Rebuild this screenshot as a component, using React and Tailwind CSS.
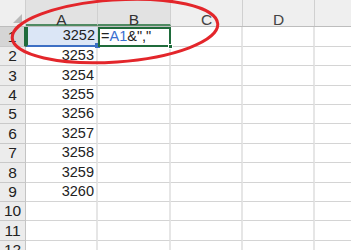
import React from 'react';

const cols = ['A', 'B', 'C', 'D', 'E'];
const colW = ['w-[72px]', 'w-[73px]', 'w-[72px]', 'w-[72px]', 'w-[40px]'];
const values = { 1: '3252', 2: '3253', 3: '3254', 4: '3255', 5: '3256', 6: '3257', 7: '3258', 8: '3259', 9: '3260' };
const rows = [1, 2, 3, 4, 5, 6, 7, 8, 9, 10, 11, 12];
const rowH = ['h-[20px]', 'h-[19px]', 'h-[20px]', 'h-[19px]', 'h-[19px]', 'h-[20px]', 'h-[19px]', 'h-[20px]', 'h-[19px]', 'h-[19px]', 'h-[20px]', 'h-[19px]'];

function Cell({ row, col, idx }) {
  // A1 is the blue reference, B1 is the active cell being edited
  if (row === 1 && col === 'A') {
    return (
      <div className={`${colW[idx]} relative shrink-0 bg-[#dbe6f6] border-l-2 border-l-[#1f6b3b] border-b-2 border-b-[#3c6fc4] border-r border-r-[#d6d6d6] flex items-center justify-end pr-[2px]`}>
        3252
        <span className="absolute right-[-3px] bottom-[-3px] w-[5px] h-[5px] bg-[#3c6fc4]" />
      </div>
    );
  }
  if (row === 1 && col === 'B') {
    return (
      <div className={`${colW[idx]} relative shrink-0 border-2 border-[#1f6b3b] flex items-center pl-[1px]`}>
        <span>=</span>
        <span className="text-[#3a6fd0]">A1</span>
        <span>&amp;","</span>
        <span className="absolute right-[-4px] bottom-[-4px] w-[5px] h-[5px] bg-[#1f6b3b] border border-white" />
      </div>
    );
  }
  return (
    <div className={`${colW[idx]} shrink-0 border-r-2 border-r-[#e6e6e6] border-b border-b-[#d4d4d4] flex items-center justify-end pr-[2px]`}>
      {col === 'A' ? values[row] : ''}
    </div>
  );
}

export default function App() {
  return (
    <div className="relative w-[351px] h-[250px] overflow-hidden bg-white text-[14.5px] text-[#222] font-['Liberation_Sans',Arial,sans-serif]">
      {/* Column header strip */}
      <div className="flex h-[27px] bg-[#efefef] border-b border-b-[#bdbdbd]">
        <div className="relative w-[26px] shrink-0 border-r border-r-[#cfcfcf]">
          <span className="absolute right-[3px] bottom-[3px] w-0 h-0 border-l-[9px] border-l-transparent border-b-[9px] border-b-[#b9b9b9]" />
        </div>
        {cols.map((c, i) => (
          <div
            key={c}
            className={`${colW[i]} shrink-0 flex items-start justify-center pt-[12px] leading-none text-[15.5px] border-r border-r-[#d0d0d0] ${i < 2 ? 'bg-[#e2e2e2] text-[#333] border-b-2 border-b-[#4f8a62]' : 'text-[#444]'}`}
          >
            {c === 'E' ? <span className="self-stretch ml-auto mr-[1px] w-[2px] bg-[#e8a33a]" /> : c}
          </div>
        ))}
      </div>

      {/* Grid rows */}
      {rows.map((r, ri) => (
        <div key={r} className={`flex ${rowH[ri]}`}>
          <div className={`w-[26px] shrink-0 flex items-center justify-center text-[15.5px] border-b border-b-[#c9c9c9] ${r === 1 ? 'bg-[#d5d5d5] border-r-2 border-r-[#1f6b3b]' : 'bg-[#ececec] border-r border-r-[#c4c4c4]'}`}>
            {r}
          </div>
          {cols.map((c, i) => (
            <Cell key={c} row={r} col={c} idx={i} />
          ))}
        </div>
      ))}

      {/* Red annotation ellipse */}
      <svg className="absolute left-0 top-0 pointer-events-none" width="351" height="250">
        <ellipse cx="115" cy="31" rx="103" ry="31" fill="none" stroke="#e3262b" strokeWidth="3" transform="rotate(-4 115 31)" />
      </svg>
    </div>
  );
}
